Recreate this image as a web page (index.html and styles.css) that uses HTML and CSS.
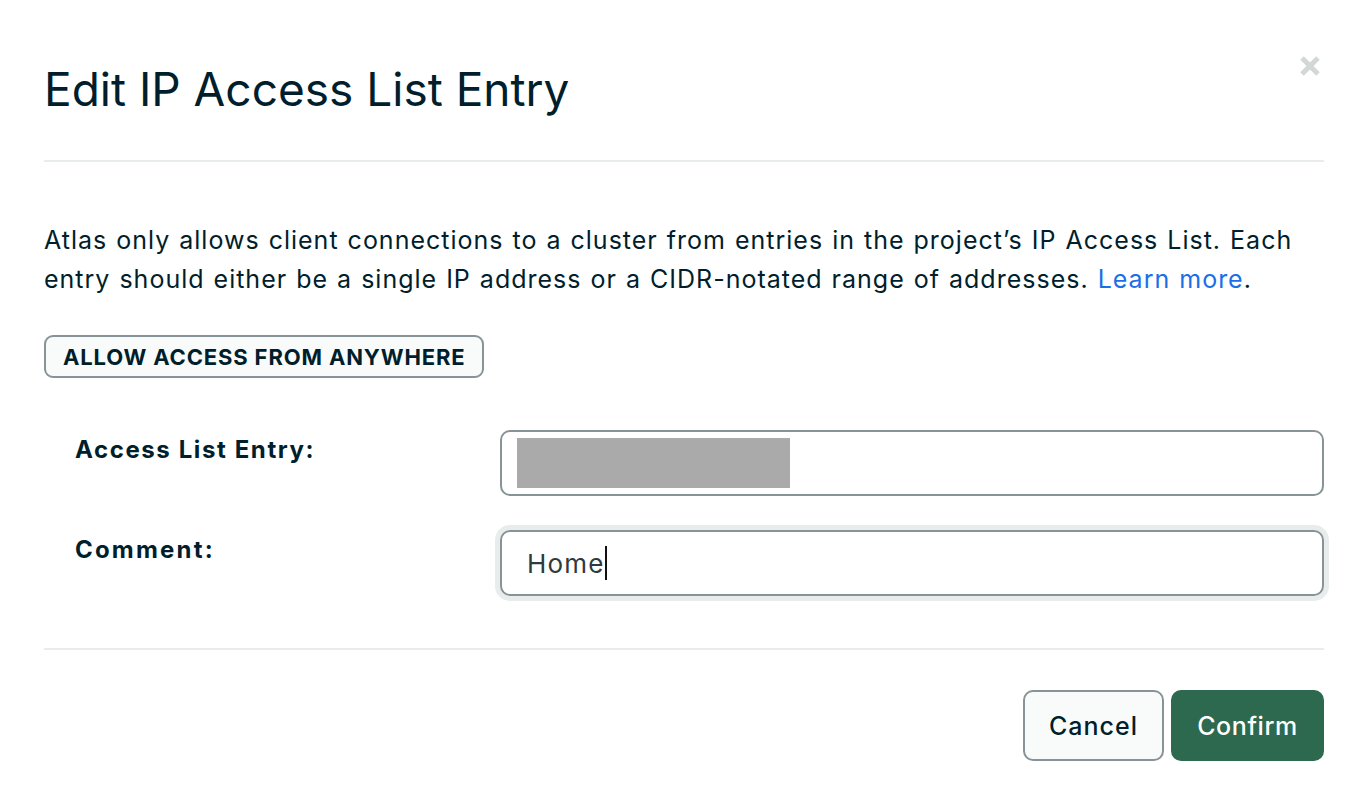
FILE: index.html
```html
<!DOCTYPE html>
<html>
<head>
<meta charset="utf-8">
<link rel="stylesheet" href="styles.css">
</head>
<body>
<div class="modal">
  <button class="close" aria-label="Close">
    <svg width="22" height="22" viewBox="0 0 22 22"><path d="M3 3 L19 19 M19 3 L3 19" stroke="#d4d7d8" stroke-width="5" stroke-linecap="butt"/></svg>
  </button>
  <h1 class="title">Edit IP Access List Entry</h1>
  <hr class="divider">
  <p class="desc">Atlas only allows client connections to a cluster from entries in the project’s IP Access List. Each entry should either be a single IP address or a CIDR-notated range of addresses. <a href="#" class="link">Learn more</a>.</p>
  <button class="allow">ALLOW ACCESS FROM ANYWHERE</button>
  <div class="form">
    <div class="row">
      <label class="label">Access List Entry:</label>
      <div class="field"><span class="redact"></span></div>
    </div>
    <div class="row">
      <label class="label label-short">Comment:</label>
      <div class="field focused"><span class="value">Home</span><span class="caret"></span></div>
    </div>
  </div>
  <hr class="divider bottom">
  <div class="actions">
    <button class="btn cancel">Cancel</button>
    <button class="btn confirm">Confirm</button>
  </div>
</div>
</body>
</html>
```
FILE: styles.css
```css
* { box-sizing: border-box; }
body {
  margin: 0;
  background: #fff;
  font-family: Inter, "Noto Sans", sans-serif;
  color: #001e2b;
}
.modal {
  position: relative;
  padding: 57px 36px 0 44px;
}
.close {
  position: absolute;
  top: 55px;
  right: 39px;
  border: 0;
  background: none;
  padding: 0;
  width: 22px;
  height: 22px;
}
.title {
  margin: 0;
  font-size: 46px;
  font-weight: 400;
  line-height: 64px;
  letter-spacing: 0;
}
.divider {
  margin: 39px 0 0;
  border: 0;
  border-top: 2px solid #e8edeb;
}
.desc {
  margin: 59px 0 0;
  font-size: 25px;
  line-height: 39px;
  letter-spacing: 1px;
  word-spacing: 1px;
}
.link { color: #1a6fe8; text-decoration: none; }
.allow {
  margin-top: 36px;
  height: 43px;
  padding: 0 17px;
  border: 2px solid #889397;
  border-radius: 9px;
  background: #f9fbfa;
  font-family: inherit;
  font-weight: 700;
  font-size: 22px;
  color: #001e2b;
  letter-spacing: 0.85px;
}
.form {
  margin-top: 52px;
  display: flex;
  flex-direction: column;
  gap: 34px;
}
.row {
  display: flex;
  align-items: flex-start;
}
.label {
  width: 456px;
  padding: 5px 0 0 31px;
  font-size: 24px;
  font-weight: 700;
  line-height: 30px;
  letter-spacing: 1.6px;
}
.label-short { letter-spacing: 2.2px; }
.field {
  flex: 1;
  height: 66px;
  border: 2px solid #889397;
  border-radius: 10px;
  display: flex;
  align-items: center;
  padding: 0 0 0 15px;
}
.redact {
  width: 273px;
  height: 50px;
  background: #aaaaaa;
}
.focused {
  box-shadow: 0 0 0 5px #e8edeb;
  padding-left: 25px;
}
.value {
  font-size: 26px;
  color: #2f3a3f;
  letter-spacing: 1.2px;
}
.caret {
  width: 2px;
  height: 34px;
  background: #111;
}
.bottom { margin-top: 52px; }
.actions {
  margin-top: 40px;
  display: flex;
  justify-content: flex-end;
  gap: 7px;
}
.btn {
  height: 71px;
  border-radius: 10px;
  font-family: inherit;
  font-size: 25px;
  font-weight: 500;
  padding: 0;
}
.cancel {
  width: 141px;
  border: 2px solid #889397;
  background: #f9fbfa;
  color: #001e2b;
  letter-spacing: 1px;
}
.confirm {
  width: 153px;
  border: 0;
  background: #2d694e;
  color: #fff;
  letter-spacing: 0.6px;
}
```
